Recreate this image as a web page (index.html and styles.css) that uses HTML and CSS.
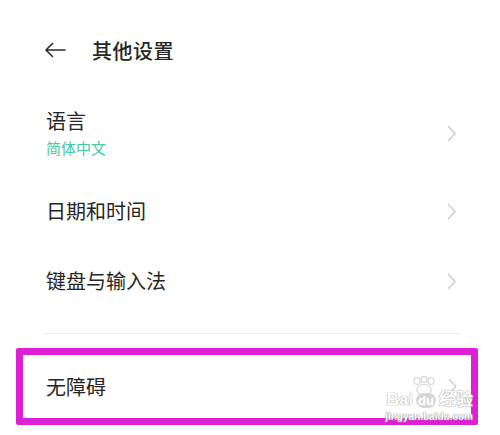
FILE: index.html
```html
<!DOCTYPE html>
<html lang="zh-CN">
<head>
    <meta charset="UTF-8">
    <meta name="viewport" content="width=device-width, initial-scale=1.0">
    <title>其他设置</title>
    <link rel="stylesheet" href="styles.css">
</head>
<body>

<div class="page">
    <!-- 顶部标题栏 -->
    <div class="header">
        <svg class="back" width="22" height="16" viewBox="0 0 22 16">
            <path d="M21 8H2M8.5 1.5L2 8l6.5 6.5" fill="none" stroke="#2a2a2a" stroke-width="1.6" stroke-linecap="round" stroke-linejoin="round"/>
        </svg>
        <span class="title">其他设置</span>
    </div>

    <!-- 设置列表 -->
    <div class="list">
        <div class="row row-lang">
            <div class="text">
                <div class="label">语言</div>
                <div class="sub">简体中文</div>
            </div>
            <svg class="chev" width="9" height="17" viewBox="0 0 9 17"><path d="M1 1l7 7.5L1 16" fill="none" stroke="#cdcdcd" stroke-width="1.4"/></svg>
        </div>
        <div class="row">
            <div class="label">日期和时间</div>
            <svg class="chev" width="9" height="17" viewBox="0 0 9 17"><path d="M1 1l7 7.5L1 16" fill="none" stroke="#cdcdcd" stroke-width="1.4"/></svg>
        </div>
        <div class="row">
            <div class="label">键盘与输入法</div>
            <svg class="chev" width="9" height="17" viewBox="0 0 9 17"><path d="M1 1l7 7.5L1 16" fill="none" stroke="#cdcdcd" stroke-width="1.4"/></svg>
        </div>
    </div>

    <div class="divider"></div>

    <!-- 高亮框 -->
    <div class="highlight">
        <div class="label">无障碍</div>
        <svg class="chev" width="9" height="17" viewBox="0 0 9 17"><path d="M1 1l7 7.5L1 16" fill="none" stroke="#cdcdcd" stroke-width="1.4"/></svg>
        <div class="watermark">
            <svg class="paw" width="26" height="22" viewBox="0 0 26 22">
                <g fill="none" stroke="#d4d4d4" stroke-width="1.2">
                    <ellipse cx="6" cy="5" rx="3" ry="3.5"/>
                    <ellipse cx="13" cy="3.5" rx="3" ry="3"/>
                    <ellipse cx="20" cy="5" rx="3" ry="3.5"/>
                    <ellipse cx="13" cy="14" rx="7" ry="5.5"/>
                </g>
            </svg>
            <div class="wm-main">Bai<span class="wm-du">du</span>经验</div>
            <div class="wm-url">jingyan.baidu.com</div>
        </div>
    </div>
</div>

</body>
</html>
```

FILE: styles.css
```css
/* 通用 */
body {
    margin: 0;
    background: #fff;
    font-family: "Noto Sans CJK SC", "Noto Sans", sans-serif;
    color: #262626;
}

.page {
    width: 500px;
    height: 435px;
    overflow: hidden;
}

/* 标题栏 */
.header {
    display: flex;
    align-items: center;
    height: 28px;
    padding: 36px 0 0 44px;
}

.header .back {
    margin-right: 26px;
}

.header .title {
    font-size: 20px;
    font-weight: 500;
    letter-spacing: 0.5px;
}

/* 列表 */
.list {
    margin-top: 34px;
    padding: 0 44px 0 46px;
}

.row {
    display: flex;
    justify-content: space-between;
    align-items: center;
    height: 70px;
}

.row-lang {
    height: 70px;
    margin-bottom: 8px;
}

.label {
    font-size: 20px;
    line-height: 26px;
}

.sub {
    font-size: 15px;
    line-height: 20px;
    margin-top: 4px;
    color: #45c9a0;
}

.divider {
    height: 1px;
    background: #ededed;
    margin: 17px 40px 0 44px;
}

/* 高亮框 */
.highlight {
    position: relative;
    display: flex;
    justify-content: space-between;
    align-items: center;
    height: 63px;
    margin: 14px 22px 0 16px;
    padding: 0 14px 0 23px;
    border: 7px solid #de20d4;
    border-radius: 2px;
}

/* 水印 */
.watermark {
    position: absolute;
    right: -2px;
    bottom: -6px;
    text-align: right;
    color: #fff;
    font-family: "Liberation Sans", sans-serif;
}

.watermark .paw {
    position: absolute;
    right: 36px;
    top: -14px;
}

.wm-main {
    font-size: 17px;
    font-weight: bold;
    line-height: 20px;
    text-shadow: 0 0 1px #9a9a9a, 0 0 1px #9a9a9a;
}

.wm-du {
    display: inline-block;
    margin: 0 3px;
    padding: 0 2px;
    border-radius: 8px;
    background: #d8d8d8;
    font-size: 13px;
    line-height: 15px;
    text-shadow: none;
}

.wm-url {
    font-size: 10px;
    font-weight: bold;
    line-height: 14px;
    text-shadow: 0 0 1px #8a8a8a, 0 0 1px #8a8a8a;
}
```
